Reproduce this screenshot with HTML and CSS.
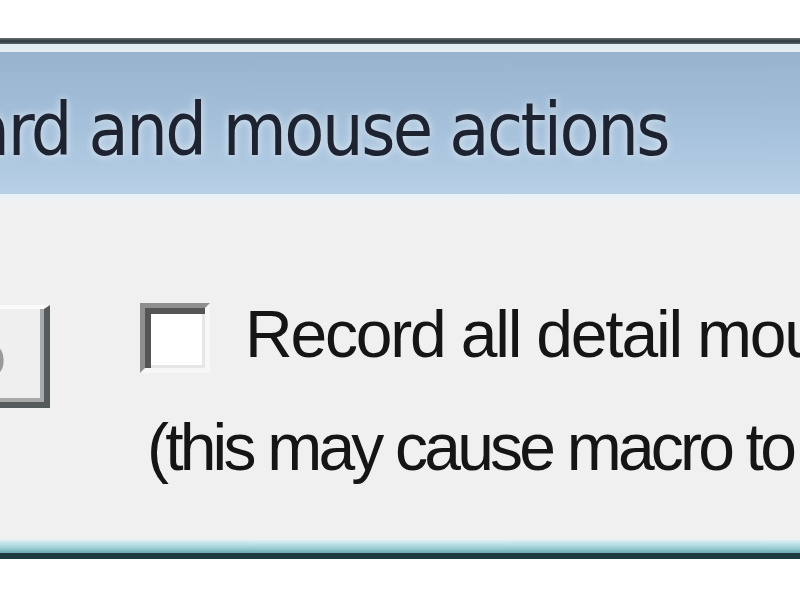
FILE: index.html
```html
<!DOCTYPE html>
<html>
<head>
<meta charset="utf-8">
<title>Record keyboard and mouse actions</title>
<link rel="stylesheet" href="styles.css">
</head>
<body>
  <div class="window">
    <div class="frame-top"></div>
    <div class="caption">
      <h1 class="caption-title">Record keyboard and mouse actions</h1>
    </div>
    <div class="panel">
      <div class="options">
        <button class="btn" type="button">Info</button>
        <div class="check-group">
          <label class="check-row">
            <span class="check"></span>
            <span class="check-text">Record all detail mouse movements</span>
          </label>
          <p class="note">(this may cause macro to run slower)</p>
        </div>
      </div>
    </div>
    <div class="frame-bottom"></div>
  </div>
</body>
</html>
```

FILE: styles.css
```css
html, body { margin: 0; padding: 0; background: #ffffff; }
body { width: 800px; height: 600px; overflow: hidden; }

.window {
  margin-top: 38px;
  width: 800px;
  overflow: hidden;
}

.frame-top {
  height: 6px;
  background: linear-gradient(#6c7478, #2f383c 50%, #58626a);
  border-bottom: 8px solid #e3ebf3;
}

.caption {
  height: 142px;
  display: flex;
  align-items: flex-start;
  justify-content: flex-end;
  padding-right: 132px;
  background: linear-gradient(#97b3ce, #a6c1db 55%, #b7d0e7);
  overflow: hidden;
}
.caption-title {
  margin: 0;
  margin-top: 38px;
  white-space: nowrap;
  font-family: "DejaVu Sans", Verdana, sans-serif;
  font-stretch: condensed;
  font-weight: normal;
  font-size: 73px;
  line-height: 80px;
  letter-spacing: -2.5px;
  color: #1d2331;
  text-shadow: 0 0 8px rgba(255,255,255,0.7);
}

.panel {
  height: 346px;
  background: linear-gradient(#e9f0f8, #eef1f4 8px, #f0f0f0 14px);
  overflow: hidden;
}

.options {
  display: flex;
  align-items: flex-start;
  padding-top: 106px;
}

.btn {
  flex: none;
  width: 160px;
  height: 103px;
  margin-left: -110px;
  margin-top: 5px;
  padding: 0 38px 0 0;
  text-align: right;
  font-family: "Liberation Sans", Arial, sans-serif;
  font-size: 56px;
  color: #9a9a9a;
  background: #efefef;
  border-style: solid;
  border-width: 4px 6px 6px 0;
  border-color: #fbfbfb #555a5c #555a5c #fbfbfb;
  box-shadow: inset -4px -4px 0 #a9a9a9;
}

.check-group {
  margin-left: 90px;
  font-family: "Liberation Sans", Arial, sans-serif;
  font-size: 66px;
  line-height: 68px;
  letter-spacing: -2.2px;
  color: #151515;
  white-space: nowrap;
}

.check-row {
  display: flex;
  align-items: flex-start;
}
.check {
  flex: none;
  box-sizing: border-box;
  width: 70px;
  height: 70px;
  margin-top: 3px;
  margin-right: 35px;
  background: #ffffff;
  border-style: solid;
  border-width: 5px;
  border-color: #8f8f8f #f7f7f7 #f7f7f7 #8f8f8f;
  box-shadow: inset 6px 6px 0 #555555, inset -3px -3px 0 #e6e6e6;
}

.note {
  margin: 40px 0 0 7px;
  letter-spacing: -3.8px;
}

.frame-bottom {
  height: 13px;
  background: linear-gradient(#dcf0f4, #9fd0d6 60%, #6aaab2);
  border-bottom: 6px solid #1e3a41;
  box-shadow: 0 3px 0 #cfe1e3;
}
```
